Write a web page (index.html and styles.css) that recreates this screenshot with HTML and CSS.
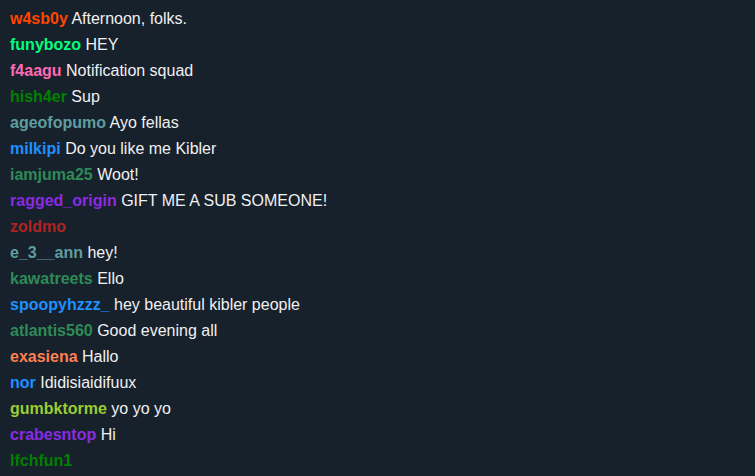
FILE: index.html
```html
<!DOCTYPE html>
<html>
<head>
<meta charset="utf-8">
<link rel="stylesheet" href="styles.css">
</head>
<body>
<div class="chat">
  <div class="msg"><span class="name c-orangered">w4sb0y</span> Afternoon, folks.</div>
  <div class="msg"><span class="name c-spring">funybozo</span> HEY</div>
  <div class="msg"><span class="name c-pink">f4aagu</span> Notification squad</div>
  <div class="msg"><span class="name c-green">hish4er</span> Sup</div>
  <div class="msg"><span class="name c-cadet">ageofopumo</span> Ayo fellas</div>
  <div class="msg"><span class="name c-dodger">milkipi</span> Do you like me Kibler</div>
  <div class="msg"><span class="name c-sea">iamjuma25</span> Woot!</div>
  <div class="msg"><span class="name c-violet">ragged_origin</span> GIFT ME A SUB SOMEONE!</div>
  <div class="msg"><span class="name c-fire">zoldmo</span></div>
  <div class="msg"><span class="name c-cadet">e_3__ann</span> hey!</div>
  <div class="msg"><span class="name c-sea">kawatreets</span> Ello</div>
  <div class="msg"><span class="name c-dodger">spoopyhzzz_</span> hey beautiful kibler people</div>
  <div class="msg"><span class="name c-sea">atlantis560</span> Good evening all</div>
  <div class="msg"><span class="name c-coral">exasiena</span> Hallo</div>
  <div class="msg"><span class="name c-dodger">nor</span> Ididisiaidifuux</div>
  <div class="msg"><span class="name c-yellowgreen">gumbktorme</span> yo yo yo</div>
  <div class="msg"><span class="name c-violet">crabesntop</span> Hi</div>
  <div class="msg"><span class="name c-green">lfchfun1</span></div>
</div>
</body>
</html>
```
FILE: styles.css
```css
html, body {
  margin: 0;
  padding: 0;
  background: #17212b;
  height: 100%;
  overflow: hidden;
}
.chat {
  display: flex;
  flex-direction: column;
  padding: 6px 10px 0 10px;
  font-family: "Liberation Sans", Arial, sans-serif;
  font-size: 16px;
  color: #f0f0f2;
}
.msg {
  height: 26px;
  line-height: 26px;
  white-space: nowrap;
}
.name { font-weight: bold; }
.c-orangered { color: #ff4500; }
.c-spring { color: #00ff7f; }
.c-pink { color: #ff69b4; }
.c-green { color: #008000; }
.c-cadet { color: #5f9ea0; }
.c-dodger { color: #1e90ff; }
.c-sea { color: #2e8b57; }
.c-violet { color: #8a2be2; }
.c-fire { color: #b22222; }
.c-coral { color: #ff7f50; }
.c-yellowgreen { color: #9acd32; }
```
